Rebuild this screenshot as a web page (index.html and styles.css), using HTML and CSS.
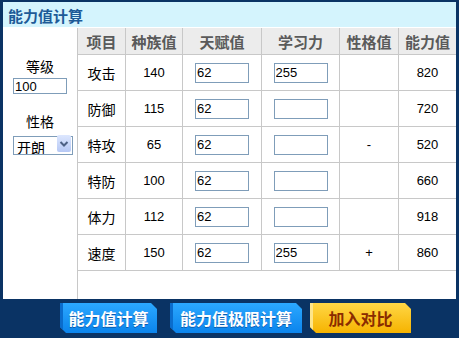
FILE: index.html
```html
<!DOCTYPE html>
<html lang="zh">
	<head>
		<title>能力值计算</title>
		<meta charset="UTF-8">
		<link rel="stylesheet" href="styles.css">
	</head>
	<body>
		<div class="panel">
			<div class="title">能力值计算</div>
			<div class="content">
				<div class="side">
					<div class="label">等级</div>
					<input class="level" type="text" value="100">
					<div class="label nature-label">性格</div>
					<div class="select-wrap">
						<select class="nature"><option>开朗</option></select>
						<span class="arrow">
							<svg width="14" height="17" viewBox="0 0 14 17"><path d="M3.5 7 L7 10.5 L10.5 7" fill="none" stroke="#4d6185" stroke-width="2"/></svg>
						</span>
					</div>
				</div>
				<div class="grid-wrap">
					<table class="stats">
						<thead>
							<tr>
								<th class="c1">项目</th>
								<th class="c2">种族值</th>
								<th class="c3">天赋值</th>
								<th class="c4">学习力</th>
								<th class="c5">性格值</th>
								<th class="c6">能力值</th>
							</tr>
						</thead>
						<tbody>
							<tr>
								<td class="name">攻击</td>
								<td class="num">140</td>
								<td><input class="cell-input" type="text" value="62"></td>
								<td><input class="cell-input" type="text" value="255"></td>
								<td class="num"></td>
								<td class="num">820</td>
							</tr>
							<tr>
								<td class="name">防御</td>
								<td class="num">115</td>
								<td><input class="cell-input" type="text" value="62"></td>
								<td><input class="cell-input" type="text" value=""></td>
								<td class="num"></td>
								<td class="num">720</td>
							</tr>
							<tr>
								<td class="name">特攻</td>
								<td class="num">65</td>
								<td><input class="cell-input" type="text" value="62"></td>
								<td><input class="cell-input" type="text" value=""></td>
								<td class="num">-</td>
								<td class="num">520</td>
							</tr>
							<tr>
								<td class="name">特防</td>
								<td class="num">100</td>
								<td><input class="cell-input" type="text" value="62"></td>
								<td><input class="cell-input" type="text" value=""></td>
								<td class="num"></td>
								<td class="num">660</td>
							</tr>
							<tr>
								<td class="name">体力</td>
								<td class="num">112</td>
								<td><input class="cell-input" type="text" value="62"></td>
								<td><input class="cell-input" type="text" value=""></td>
								<td class="num"></td>
								<td class="num">918</td>
							</tr>
							<tr>
								<td class="name">速度</td>
								<td class="num">150</td>
								<td><input class="cell-input" type="text" value="62"></td>
								<td><input class="cell-input" type="text" value="255"></td>
								<td class="num">+</td>
								<td class="num">860</td>
							</tr>
						</tbody>
					</table>
				</div>
			</div>
		</div>
		<div class="actions">
			<a class="btn blue calc">能力值计算</a>
			<a class="btn blue limit">能力值极限计算</a>
			<a class="btn gold compare">加入对比</a>
		</div>
	</body>
</html>
```

FILE: styles.css
```css
html,body{margin:0;padding:0}
body{width:459px;height:338px;overflow:hidden;background:#0a3364;font-family:"Noto Sans CJK SC","Liberation Sans",sans-serif;}

.panel{margin:2px 3px 0 3px;background:#fff;}
.title{height:25px;box-sizing:border-box;padding:2px 0 0 5px;line-height:23px;background:#d4f4fd;color:#1d5b98;font-size:15px;font-weight:bold;}
.content{display:flex;height:272px;box-sizing:border-box;padding-top:1px;}

.side{width:74px;padding-top:28px;}
.label{height:20px;line-height:20px;font-size:14px;text-align:center;color:#000;}
.level{display:block;width:54px;height:16px;box-sizing:border-box;margin:2px 0 0 10px;padding:0 1px;border:1px solid #7f9db9;font:13px "Liberation Sans",sans-serif;outline:none;}
.nature-label{margin-top:17px;}
.select-wrap{position:relative;width:60px;height:19px;margin:3px 0 0 10px;}
.nature{-webkit-appearance:none;appearance:none;width:60px;height:19px;box-sizing:border-box;border:1px solid #7f9db9;border-radius:0;padding:0 0 0 3px;background:#fff;font:14px "Noto Sans CJK SC",sans-serif;color:#000;outline:none;}
.arrow{position:absolute;right:2px;top:1px;width:14px;height:17px;background:linear-gradient(#dde7fe,#b6c8f5);border-radius:2px;}
.arrow svg{display:block;}

.grid-wrap{flex:1;border-left:1px solid #c8c8c8;}
.stats{border-collapse:separate;border-spacing:0;table-layout:fixed;width:378px;}
.stats th,.stats td{padding:0;box-sizing:border-box;border-right:1px solid #c8c8c8;border-bottom:1px solid #c8c8c8;text-align:center;}
.stats th:last-child,.stats td:last-child{border-right:0;}
.stats thead tr{height:27px;}
.stats th{background:#ececec;color:#5a5a5a;font-size:15px;font-weight:bold;}
.stats tbody tr{height:36px;}
.c1{width:48px}.c2{width:57px}.c3{width:79px}.c4{width:78px}.c5{width:59px}.c6{width:57px}
.name{font-size:14px;color:#000;}
.num{font:13px "Liberation Sans",sans-serif;color:#000;}
.cell-input{display:block;margin:0 auto;width:54px;height:20px;box-sizing:border-box;padding:0 1px;border:1px solid #7f9db9;font:13px "Liberation Sans",sans-serif;outline:none;}

.actions{display:flex;padding:4px 0 0 60px;}
.btn{height:30px;display:flex;align-items:center;justify-content:center;font-size:16px;font-weight:bold;cursor:pointer;
	clip-path:polygon(0 0,calc(100% - 6px) 0,100% 6px,100% 100%,6px 100%,0 calc(100% - 6px));}
.blue{color:#fff;background:linear-gradient(#2ba8ff,#0b84ec);box-shadow:inset 3px 0 0 #0a6ccc;text-shadow:0 1px 0 #0a5cb0;}
.gold{color:#8a2c00;background:linear-gradient(#ffd746,#f6b300);box-shadow:inset 3px 0 0 #fde58a;}
.calc{width:97px;margin-right:13px;}
.limit{width:132px;margin-right:8px;}
.compare{width:101px;}
```
